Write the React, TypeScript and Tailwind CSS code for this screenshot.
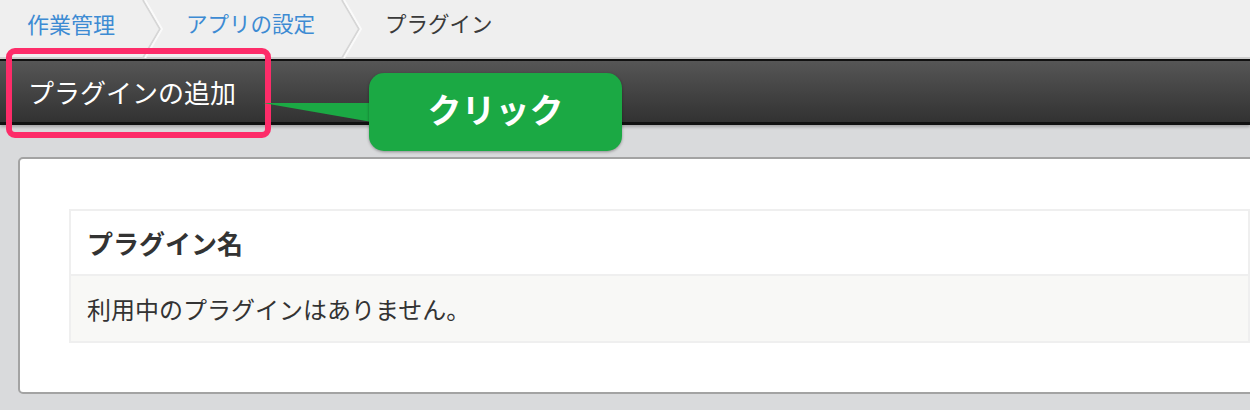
import React from "react";

const jp = { fontFamily: '"Noto Sans CJK JP", "Noto Sans", sans-serif' };

function Chevron() {
  // 区切りの矢印
  return (
    <svg width="24" height="58" viewBox="0 0 24 58" className="shrink-0">
      <polyline points="2,0 19,29 2,58" fill="none" stroke="#d6d6d6" strokeWidth="2" />
      <polyline points="4,0 21,29 4,58" fill="none" stroke="#fafafa" strokeWidth="2" />
    </svg>
  );
}

export default function App() {
  return (
    <div className="relative w-[1250px] h-[410px] overflow-hidden bg-[#d9dadc]" style={jp}>
      {/* パンくず */}
      <div className="h-[59px] bg-[#efefef] border-b-2 border-[#cfcfcf] flex items-start">
        <div className="flex items-center h-[57px]">
          <span className="pl-[27px] pr-[26px] pb-[10px] text-[22px] text-[#3d8bd3]">作業管理</span>
          <Chevron />
          <span className="pl-[21px] pr-[25px] pb-[10px] text-[21.5px] text-[#3d8bd3]">アプリの設定</span>
          <Chevron />
          <span className="pl-[21px] pb-[10px] text-[21.5px] text-[#3a3a3a]">プラグイン</span>
        </div>
      </div>

      {/* ダークバー */}
      <div className="h-[66px] border-t-2 border-b-[3px] border-[#111] bg-gradient-to-b from-[#565656] to-[#323232] flex items-center pl-[28px] shadow-[0_2px_3px_rgba(0,0,0,0.25)]">
        <span className="text-[26px] text-white">プラグインの追加</span>
      </div>

      {/* 本体 */}
      <div className="pt-[32px] pl-[18px]">
        <div className="w-[1260px] h-[237px] bg-white border-2 border-[#a3a3a3] rounded-[5px] pt-[50px] pl-[49px]">
          <div className="w-[1181px] border-2 border-[#efefef]">
            <div className="h-[65px] flex items-center pl-[16px] bg-white border-b-2 border-[#efefef]">
              <span className="text-[26px] font-bold text-[#333]">プラグイン名</span>
            </div>
            <div className="h-[65px] flex items-center pl-[16px] bg-[#f8f8f6]">
              <span className="text-[24px] text-[#333]">利用中のプラグインはありません。</span>
            </div>
          </div>
        </div>
      </div>

      {/* 強調の枠 */}
      <div className="absolute left-[6px] top-[48px] w-[265px] h-[90px] border-[6px] border-[#fd2c69] rounded-[9px]" />

      {/* 吹き出し */}
      <svg className="absolute left-[262px] top-[100px]" width="112" height="26" viewBox="0 0 112 26">
        <polygon points="1,3 110,3 110,22" fill="#1ba944" />
      </svg>
      <div className="absolute left-[369px] top-[73px] w-[253px] h-[78px] rounded-[15px] bg-[#1ba944] shadow-[0_1px_3px_rgba(0,0,0,0.35)] flex items-center justify-center pb-[8px]">
        <span className="text-[34px] font-bold text-white">クリック</span>
      </div>
    </div>
  );
}
